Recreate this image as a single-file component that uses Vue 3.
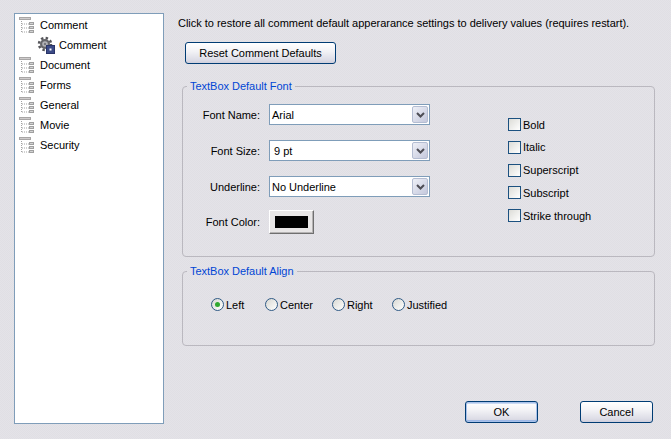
<template>
  <div class="dialog">
    <ul class="tree">
      <li v-for="item in tree" :key="item.id" class="tree-row" :class="{ child: item.child }">
        <svg v-if="item.child" class="gear" width="17" height="17" viewBox="0 0 17 17">
          <circle cx="7" cy="7" r="5" fill="#66666a"/>
          <circle cx="7" cy="7" r="6" fill="none" stroke="#55555a" stroke-width="2.5" stroke-dasharray="2.400 2.300"/>
          <circle cx="7" cy="7" r="2.800" fill="#b4b4b8"/>
          <circle cx="7" cy="7" r="1.200" fill="#77777b"/>
          <rect x="8.500" y="8.500" width="8" height="8" fill="#3b4a86" stroke="#2a3468"/>
          <rect x="11.500" y="11.500" width="2" height="2" fill="#fff"/>
        </svg>
        <svg v-else class="branch" width="16" height="16" viewBox="0 0 16 16">
          <rect x="0.500" y="0.500" width="11" height="2" fill="#cfcccc" stroke="#a8a6a6"/>
          <path d="M2.500 4v11M3 7h7M3 11h7M3 15h7" stroke="#a3a3a3" stroke-dasharray="1 1"/>
          <rect x="10.500" y="5.500" width="4" height="2" fill="#d2d2d2" stroke="#a0a0a0"/>
          <rect x="10.500" y="9.500" width="4" height="2" fill="#d2d2d2" stroke="#a0a0a0"/>
          <rect x="10.500" y="13.500" width="4" height="2" fill="#d2d2d2" stroke="#a0a0a0"/>
        </svg>
        <span>{{ item.label }}</span>
      </li>
    </ul>

    <main class="pane">
      <p class="intro">Click to restore all comment default apperarance settings to delivery values (requires restart).</p>
      <button class="btn reset" type="button">Reset Comment Defaults</button>

      <fieldset class="group font-group">
        <legend>TextBox Default Font</legend>
        <div class="font-body">
          <div class="fields">
            <div v-for="f in fields" :key="f.label" class="field">
              <label>{{ f.label }}</label>
              <div class="combo">
                <span class="combo-value" :style="{ marginLeft: f.indent + 'px' }">{{ f.value }}</span>
                <span class="combo-arrow">
                  <svg width="9" height="6" viewBox="0 0 9 6"><path d="M1 1l3.500 3.500L8 1" fill="none" stroke="#4d4d55" stroke-width="2"/></svg>
                </span>
              </div>
            </div>
            <div class="field color-field">
              <label>Font Color:</label>
              <button class="swatch" type="button"><span></span></button>
            </div>
          </div>
          <div class="checks">
            <div v-for="c in styles" :key="c" class="check">
              <span class="box"></span>{{ c }}
            </div>
          </div>
        </div>
      </fieldset>

      <fieldset class="group align-group">
        <legend>TextBox Default Align</legend>
        <div class="radios">
          <div v-for="r in aligns" :key="r.label" class="radio" :style="{ width: r.width + 'px' }">
            <span class="dot" :class="{ on: r.on }"></span>{{ r.label }}
          </div>
        </div>
      </fieldset>

      <div class="actions">
        <button class="btn ok" type="button">OK</button>
        <button class="btn" type="button">Cancel</button>
      </div>
    </main>
  </div>
</template>

<script setup>
const tree = [
  { id: 1, label: "Comment" },
  { id: 2, label: "Comment", child: true },
  { id: 3, label: "Document" },
  { id: 4, label: "Forms" },
  { id: 5, label: "General" },
  { id: 6, label: "Movie" },
  { id: 7, label: "Security" },
];

const fields = [
  { label: "Font Name:", value: "Arial", indent: 0 },
  { label: "Font Size:", value: "9 pt", indent: 2 },
  { label: "Underline:", value: "No Underline", indent: 0 },
];

const styles = ["Bold", "Italic", "Superscript", "Subscript", "Strike through"];

const aligns = [
  { label: "Left", width: 54, on: true },
  { label: "Center", width: 67 },
  { label: "Right", width: 60 },
  { label: "Justified", width: 70 },
];
</script>

<style>
body {
  margin: 0;
  overflow: hidden;
}
</style>

<style scoped>
.dialog {
  width: 671px;
  height: 439px;
  box-sizing: border-box;
  padding: 13px 0 15px 14px;
  display: flex;
  font: 11px "Liberation Sans", Arial, sans-serif;
  letter-spacing: -0.02px;
  color: #000;
  background-color: #e2e1e6;
  background-image: conic-gradient(#e4e3e8 25%, #e0dfe4 0 50%, #e4e3e8 0 75%, #e0dfe4 0);
  background-size: 2px 2px;
}

.tree {
  width: 150px;
  box-sizing: border-box;
  margin: 0;
  padding: 1px 0 0 4px;
  list-style: none;
  background: #fff;
  border: 1px solid #7f9db9;
  flex: none;
}
.tree-row {
  height: 20px;
  display: flex;
  align-items: center;
  gap: 5px;
}
.tree-row.child {
  padding-left: 19px;
  gap: 4px;
}
.branch,
.gear {
  overflow: visible;
}

.pane {
  width: 477px;
  margin-left: 14px;
  display: flex;
  flex-direction: column;
}
.intro {
  margin: 4px 0 0;
  line-height: 13px;
  white-space: nowrap;
}

.btn {
  width: 73px;
  height: 22px;
  padding: 0;
  font: inherit;
  letter-spacing: inherit;
  color: #000;
  border: 1px solid #003c74;
  border-radius: 3px;
  background: linear-gradient(#fff, #f3f3f6 40%, #dcdce6 85%, #cfcfdc);
}
.reset {
  width: 151px;
  margin: 12px 0 0 7px;
}
.ok {
  box-shadow: inset 0 0 0 1px #a9c2ea, inset 0 2px 0 #c9d9f2, inset 0 -2px 0 #9db8e6;
}

.group {
  margin: 0 0 0 4px;
  padding: 0;
  min-width: 0;
  box-sizing: border-box;
  border: 1px solid #bab8bf;
  border-radius: 4px;
}
.group legend {
  margin-left: 4px;
  padding: 0 3px;
  color: #0046d5;
  line-height: 13px;
}
.font-group {
  margin-top: 16px;
  height: 177px;
}
.align-group {
  margin-top: 8px;
  height: 81px;
}

.font-body {
  display: flex;
  padding-top: 11px;
}
.fields {
  display: flex;
  flex-direction: column;
  gap: 15px;
}
.field {
  display: flex;
  align-items: center;
  gap: 9px;
}
.field label {
  width: 77px;
  text-align: right;
}
.color-field {
  margin-top: -2px;
}
.combo {
  width: 161px;
  height: 21px;
  box-sizing: border-box;
  display: flex;
  align-items: center;
  justify-content: space-between;
  padding: 1px 1px 1px 2px;
  background: #fff;
  border: 1px solid #7f9db9;
}
.combo-arrow {
  width: 16px;
  height: 17px;
  box-sizing: border-box;
  display: flex;
  align-items: center;
  justify-content: center;
  background: linear-gradient(135deg, #eef0f7, #c4c8dc);
  border: 1px solid #b4bdd2;
  border-radius: 2px;
}
.swatch {
  width: 45px;
  height: 24px;
  padding: 0;
  display: flex;
  align-items: center;
  justify-content: center;
  background: #e8e6e6;
  border: 1px solid;
  border-color: #fff #6f6f6f #6f6f6f #fff;
  box-shadow: inset -1px -1px 0 #b5b3b3;
}
.swatch span {
  width: 33px;
  height: 12px;
  background: #000;
}

.checks {
  margin: 14.2px 0 0 78px;
  display: flex;
  flex-direction: column;
  gap: 9.75px;
}
.check {
  height: 13px;
  display: flex;
  align-items: center;
  gap: 2px;
}
.box {
  width: 13px;
  height: 13px;
  box-sizing: border-box;
  border: 1px solid #1c5180;
  background: linear-gradient(135deg, #dcdcd7, #fff);
}

.radios {
  display: flex;
  padding: 20px 0 0 28px;
}
.radio {
  display: flex;
  align-items: center;
  gap: 2px;
  height: 13px;
}
.dot {
  width: 13px;
  height: 13px;
  box-sizing: border-box;
  border-radius: 50%;
  border: 1px solid #2f5a85;
  background: linear-gradient(135deg, #d8d8d2, #fff);
  position: relative;
}
.dot.on::after {
  content: "";
  position: absolute;
  left: 3px;
  top: 3px;
  width: 5px;
  height: 5px;
  border-radius: 50%;
  background: #2fa82f;
}

.actions {
  margin: 55px 0 0 287px;
  display: flex;
  gap: 42px;
}
</style>
